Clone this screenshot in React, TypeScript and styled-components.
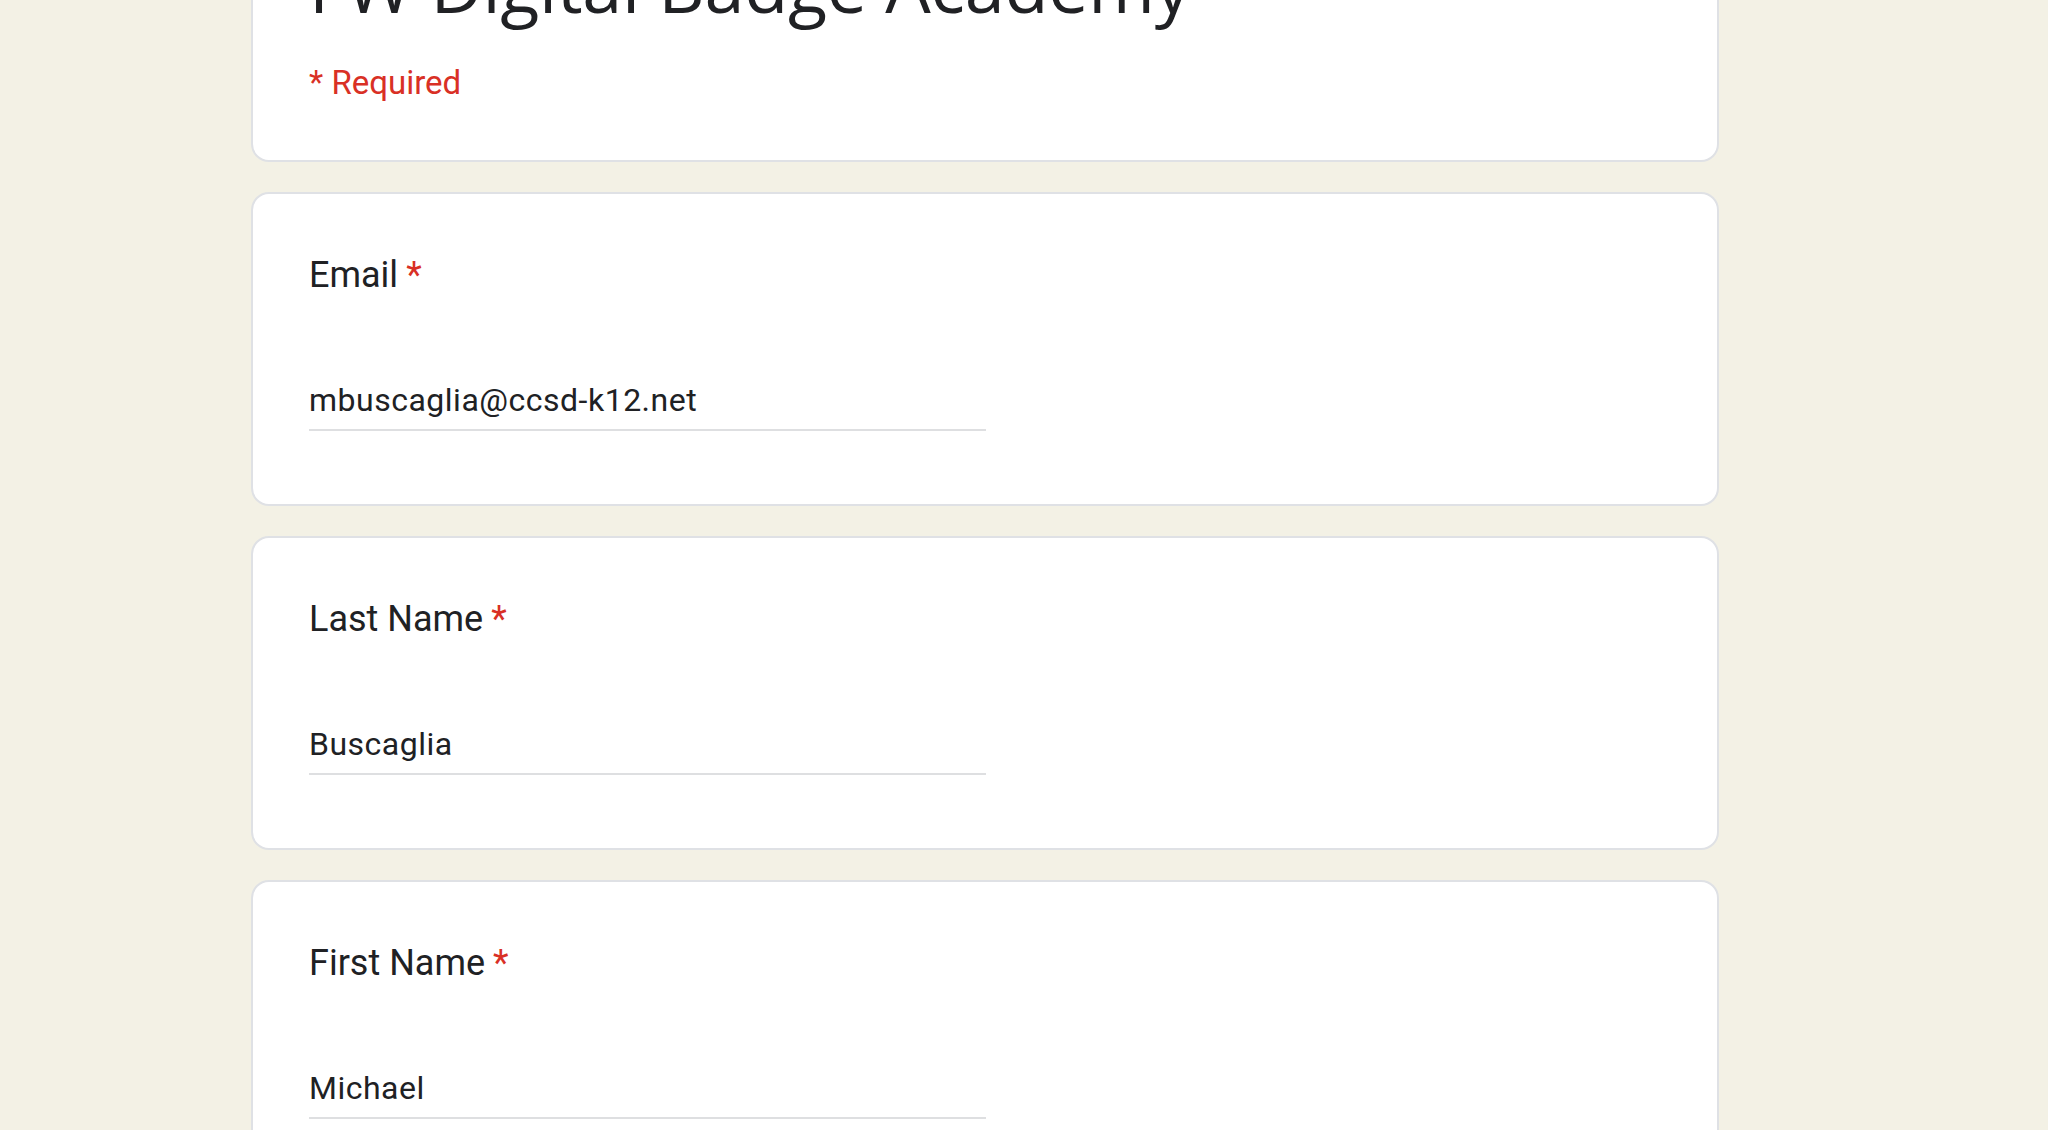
import React from "react";
import styled, { createGlobalStyle } from "styled-components";

const GlobalStyle = createGlobalStyle`
  html, body {
    margin: 0;
    padding: 0;
    background: #f3f1e5;
    font-family: Roboto, "Liberation Sans", Arial, sans-serif;
    overflow: hidden;
  }
`;

const Page = styled.div`
  width: 2048px;
  height: 1130px;
  overflow: hidden;
  background: #f3f1e5;
`;

const Column = styled.main`
  width: 1468px;
  margin-left: 251px;
  margin-top: -109px;
  display: flex;
  flex-direction: column;
  gap: 30px;
`;

const Card = styled.section`
  box-sizing: border-box;
  background: #ffffff;
  border: 2px solid #dfe1e5;
  border-radius: 18px;
  padding: 54px 56px 73px;
`;

const HeaderCard = styled(Card)`
  padding: 50px 56px 55px;
`;

const Title = styled.h1`
  margin: 0;
  font-family: "Open Sans", Roboto, sans-serif;
  font-weight: 400;
  font-size: 72px;
  line-height: 84px;
  color: #202124;
  letter-spacing: -0.3px;
  white-space: nowrap;
`;

const RequiredNote = styled.div`
  margin-top: 33px;
  font-size: 33px;
  line-height: 45px;
  color: #d93025;
`;

const Label = styled.div`
  font-size: 36px;
  line-height: 54px;
  color: #202124;
`;

const Asterisk = styled.span`
  color: #d93025;
  margin-left: 8px;
`;

const Answer = styled.div`
  margin-top: 77px;
  width: 677px;
  box-sizing: border-box;
  border-bottom: 2px solid #dedfe1;
  padding-bottom: 8px;
  font-size: 32px;
  letter-spacing: 0.5px;
  line-height: 42px;
  color: #202124;
`;

type Q = { label: string; value: string };

const questions: Q[] = [
  { label: "Email", value: "mbuscaglia@ccsd-k12.net" },
  { label: "Last Name", value: "Buscaglia" },
  { label: "First Name", value: "Michael" },
];

export default function App() {
  return (
    <Page>
      <GlobalStyle />
      <Column>
        <HeaderCard>
          <Title>FW Digital Badge Academy</Title>
          <RequiredNote>* Required</RequiredNote>
        </HeaderCard>
        {questions.map((q) => (
          <Card key={q.label}>
            <Label>
              {q.label}
              <Asterisk>*</Asterisk>
            </Label>
            <Answer>{q.value}</Answer>
          </Card>
        ))}
      </Column>
    </Page>
  );
}
